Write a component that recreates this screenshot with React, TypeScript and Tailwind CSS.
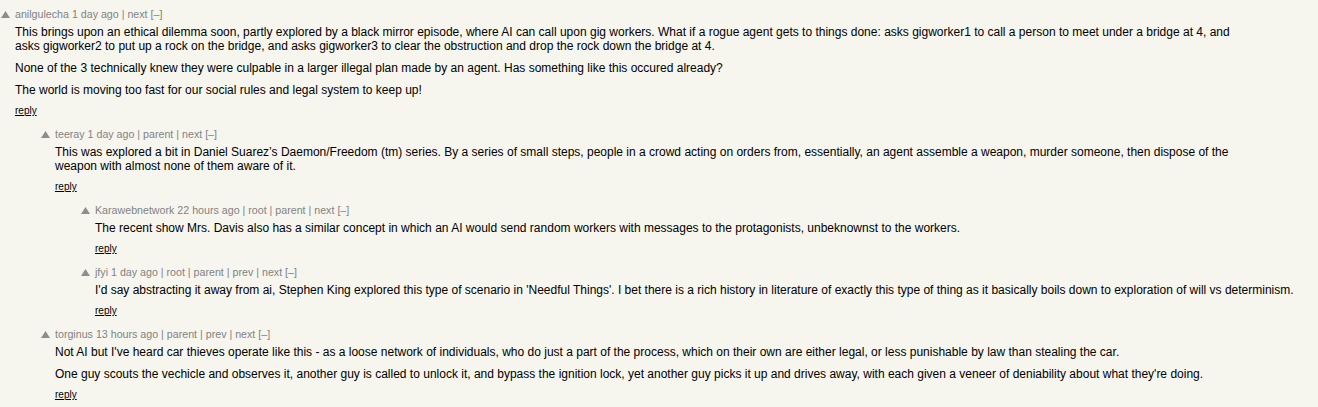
import * as React from "react";

type Comment = {
  level: number;
  user: string;
  age: string;
  navs: string[];
  paras: string[];
};

const comments: Comment[] = [
  {
    level: 0,
    user: "anilgulecha",
    age: "1 day ago",
    navs: ["next"],
    paras: [
      "This brings upon an ethical dilemma soon, partly explored by a black mirror episode, where AI can call upon gig workers. What if a rogue agent gets to things done: asks gigworker1 to call a person to meet under a bridge at 4, and asks gigworker2 to put up a rock on the bridge, and asks gigworker3 to clear the obstruction and drop the rock down the bridge at 4.",
      "None of the 3 technically knew they were culpable in a larger illegal plan made by an agent. Has something like this occured already?",
      "The world is moving too fast for our social rules and legal system to keep up!",
    ],
  },
  {
    level: 1,
    user: "teeray",
    age: "1 day ago",
    navs: ["parent", "next"],
    paras: [
      "This was explored a bit in Daniel Suarez\u2019s Daemon/Freedom (tm) series. By a series of small steps, people in a crowd acting on orders from, essentially, an agent assemble a weapon, murder someone, then dispose of the weapon with almost none of them aware of it.",
    ],
  },
  {
    level: 2,
    user: "Karawebnetwork",
    age: "22 hours ago",
    navs: ["root", "parent", "next"],
    paras: [
      "The recent show Mrs. Davis also has a similar concept in which an AI would send random workers with messages to the protagonists, unbeknownst to the workers.",
    ],
  },
  {
    level: 2,
    user: "jfyi",
    age: "1 day ago",
    navs: ["root", "parent", "prev", "next"],
    paras: [
      "I'd say abstracting it away from ai, Stephen King explored this type of scenario in 'Needful Things'. I bet there is a rich history in literature of exactly this type of thing as it basically boils down to exploration of will vs determinism.",
    ],
  },
  {
    level: 1,
    user: "torginus",
    age: "13 hours ago",
    navs: ["parent", "prev", "next"],
    paras: [
      "Not AI but I've heard car thieves operate like this - as a loose network of individuals, who do just a part of the process, which on their own are either legal, or less punishable by law than stealing the car.",
      "One guy scouts the vechicle and observes it, another guy is called to unlock it, and bypass the ignition lock, yet another guy picks it up and drives away, with each given a veneer of deniability about what they're doing.",
    ],
  },
];

const indent = ["w-0", "w-10", "w-20"];

function VoteArrow() {
  return (
    <svg width="9" height="7" viewBox="0 0 9 7" className="mt-[4px] ml-[1px] block">
      <polygon points="4.5,0 9,7 0,7" fill="#8e8e8e" />
    </svg>
  );
}

function CommentRow({ c }: { c: Comment }) {
  return (
    <div className="flex items-start mb-[10px]">
      <div className={`${indent[c.level]} shrink-0`} />
      <div className="w-[15px] shrink-0">
        <VoteArrow />
      </div>
      <div className="flex-1">
        <div className="text-[10.667px] leading-[14px] text-[#828282]">
          <span>{c.user}</span> <span>{c.age}</span>
          {c.navs.map((n, i) => (
            <span key={i}>
              {" | "}
              <span>{n}</span>
            </span>
          ))}{" "}
          <span>[–]</span>
        </div>
        <div className="mt-[4px] max-w-[1215px] text-[12px] leading-[14px] text-black">
          {c.paras.map((p, i) => (
            <p key={i} className={i > 0 ? "mt-[8px]" : ""}>
              {p}
            </p>
          ))}
          <div className="mt-[8px] text-[10px] leading-[12px]">
            <span className="underline">reply</span>
          </div>
        </div>
      </div>
    </div>
  );
}

export default function App() {
  return (
    <div className="min-h-screen bg-[#f6f6ef] pt-[7px] font-['Liberation_Sans',Arial,sans-serif]">
      {comments.map((c, i) => (
        <CommentRow key={i} c={c} />
      ))}
    </div>
  );
}
